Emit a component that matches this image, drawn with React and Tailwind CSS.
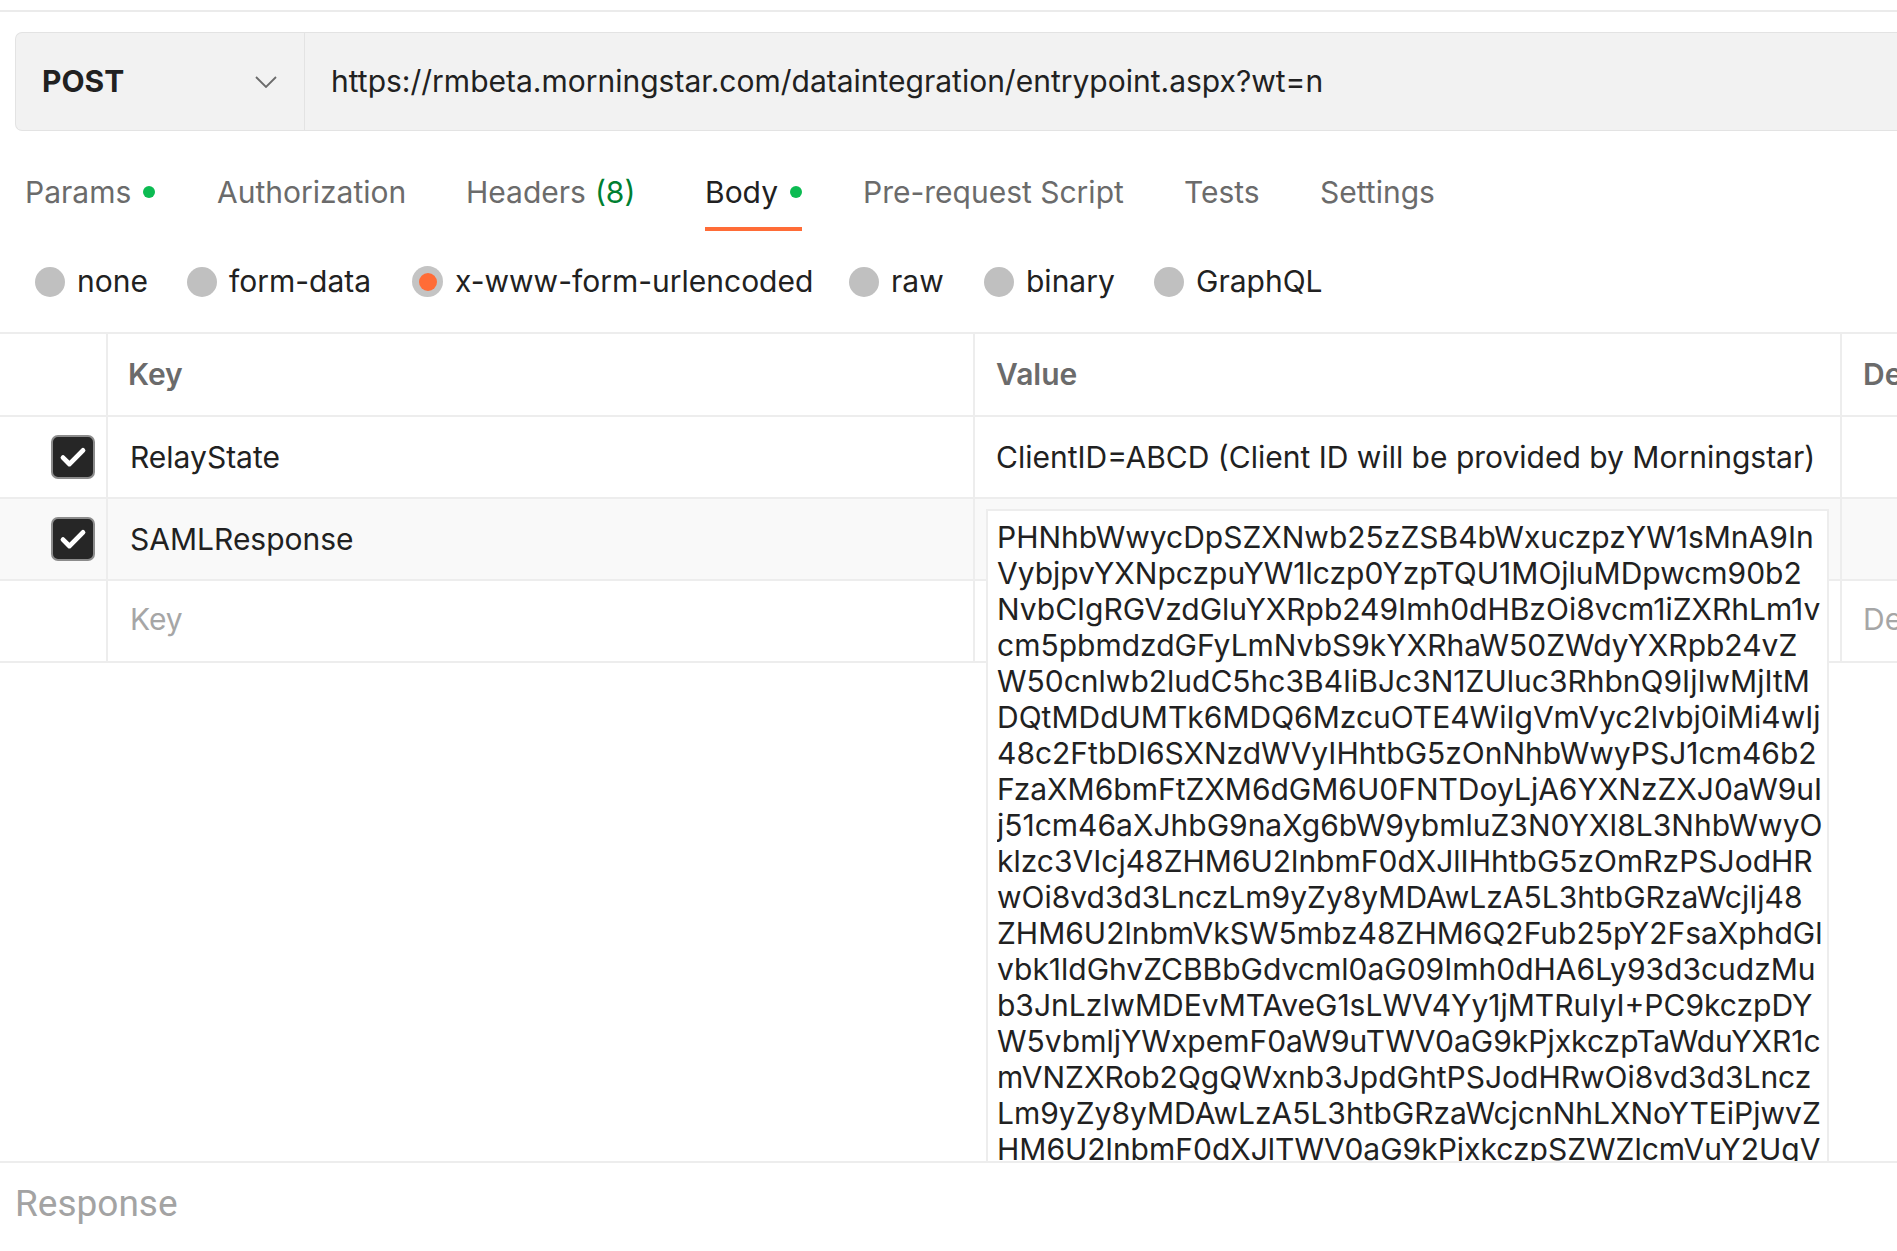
import React from "react";

const LINES = [
  "PHNhbWwycDpSZXNwb25zZSB4bWxuczpzYW1sMnA9In",
  "VybjpvYXNpczpuYW1lczp0YzpTQU1MOjluMDpwcm90b2",
  "NvbCIgRGVzdGluYXRpb249Imh0dHBzOi8vcm1iZXRhLm1v",
  "cm5pbmdzdGFyLmNvbS9kYXRhaW50ZWdyYXRpb24vZ",
  "W50cnlwb2ludC5hc3B4IiBJc3N1ZUluc3RhbnQ9IjIwMjItM",
  "DQtMDdUMTk6MDQ6MzcuOTE4WiIgVmVyc2lvbj0iMi4wIj",
  "48c2FtbDI6SXNzdWVyIHhtbG5zOnNhbWwyPSJ1cm46b2",
  "FzaXM6bmFtZXM6dGM6U0FNTDoyLjA6YXNzZXJ0aW9uI",
  "j51cm46aXJhbG9naXg6bW9ybmluZ3N0YXI8L3NhbWwyO",
  "klzc3VIcj48ZHM6U2lnbmF0dXJlIHhtbG5zOmRzPSJodHR",
  "wOi8vd3d3LnczLm9yZy8yMDAwLzA5L3htbGRzaWcjIj48",
  "ZHM6U2lnbmVkSW5mbz48ZHM6Q2Fub25pY2FsaXphdGl",
  "vbk1ldGhvZCBBbGdvcml0aG09Imh0dHA6Ly93d3cudzMu",
  "b3JnLzIwMDEvMTAveG1sLWV4Yy1jMTRuIyI+PC9kczpDY",
  "W5vbmljYWxpemF0aW9uTWV0aG9kPjxkczpTaWduYXR1c",
  "mVNZXRob2QgQWxnb3JpdGhtPSJodHRwOi8vd3d3Lncz",
  "Lm9yZy8yMDAwLzA5L3htbGRzaWcjcnNhLXNoYTEiPjwvZ",
  "HM6U2lnbmF0dXJlTWV0aG9kPjxkczpSZWZlcmVuY2UgV",
  "VJJPSIjXzA0YjY1ZWNlLWQ2ODQtNDI5Yy1hYjQ4LTQ1",
];

function Dot() {
  return <span className="ml-[12px] inline-block w-[12px] h-[12px] rounded-full bg-[#0cbb52]" />;
}

function Check() {
  return (
    <div className="w-[44px] h-[44px] rounded-[7px] bg-[#262626] border-2 border-[#8c8c8c] flex items-center justify-center">
      <svg width="32" height="32" viewBox="0 0 24 24" fill="none">
        <path d="M4.5 12.5l4.8 4.8L19.5 7" stroke="#fff" strokeWidth="3.6" strokeLinecap="round" strokeLinejoin="round" />
      </svg>
    </div>
  );
}

function Radio({ w, label, selected }) {
  return (
    <div className={`flex items-center shrink-0 ${w}`}>
      {selected ? (
        <span className="w-[31px] h-[31px] rounded-full bg-[#c4c4c4] flex items-center justify-center">
          <span className="w-[18px] h-[18px] rounded-full bg-[#ff6c37]" />
        </span>
      ) : (
        <span className="w-[30px] h-[30px] rounded-full bg-[#c0c0c0]" />
      )}
      <span className="ml-[12px] text-[30px] text-[#212121]">{label}</span>
    </div>
  );
}

export default function App() {
  return (
    <div className="w-[1897px] h-[1251px] overflow-hidden bg-white flex flex-col text-[#212121] font-['Inter','Noto_Sans',sans-serif]">
      <div className="flex-1 overflow-hidden flex flex-col">
        <div className="h-[10px] shrink-0" />
        <div className="h-[2px] bg-[#ebebeb] shrink-0" />
        {/* URL bar */}
        <div className="pt-[20px] pl-[15px] shrink-0">
          <div className="flex h-[99px] bg-[#f2f2f2] border border-r-0 border-[#e3e3e3] rounded-l-[7px]">
            <div className="w-[289px] shrink-0 flex items-center justify-between pl-[26px] pr-[27px] border-r border-[#e3e3e3]">
              <span className="text-[30px] font-bold text-[#212121]">POST</span>
              <svg width="22" height="12" viewBox="0 0 22 12" fill="none">
                <path d="M1 1l10 10L21 1" stroke="#6b6b6b" strokeWidth="1.8" />
              </svg>
            </div>
            <div className="flex items-center pl-[26px] text-[30px] text-[#212121] whitespace-nowrap">
              https://rmbeta.morningstar.com/dataintegration/entrypoint.aspx?wt=n
            </div>
          </div>
        </div>
        {/* Tabs */}
        <div className="flex h-[100px] pt-[26px] pl-[25px] shrink-0 text-[30px] text-[#6b6b6b]">
          <div className="w-[192px] shrink-0">
            <span className="inline-flex items-center h-[74px] border-b-4 border-transparent">Params<Dot /></span>
          </div>
          <div className="w-[249px] shrink-0">
            <span className="inline-flex items-center h-[74px] border-b-4 border-transparent">Authorization</span>
          </div>
          <div className="w-[239px] shrink-0">
            <span className="inline-flex items-center h-[74px] border-b-4 border-transparent">
              Headers<span className="ml-[9px] text-[#007f31]">(8)</span>
            </span>
          </div>
          <div className="w-[158px] shrink-0">
            <span className="inline-flex items-center h-[74px] border-b-4 border-[#ff6c37] text-[#212121]">Body<Dot /></span>
          </div>
          <div className="w-[321px] shrink-0">
            <span className="inline-flex items-center h-[74px] border-b-4 border-transparent">Pre-request Script</span>
          </div>
          <div className="w-[136px] shrink-0">
            <span className="inline-flex items-center h-[74px] border-b-4 border-transparent">Tests</span>
          </div>
          <div className="shrink-0">
            <span className="inline-flex items-center h-[74px] border-b-4 border-transparent">Settings</span>
          </div>
        </div>
        {/* Body type radios */}
        <div className="flex items-center h-[101px] pl-[35px] shrink-0">
          <Radio w="w-[152px]" label="none" />
          <Radio w="w-[225px]" label="form-data" />
          <Radio w="w-[437px]" label="x-www-form-urlencoded" selected />
          <Radio w="w-[135px]" label="raw" />
          <Radio w="w-[170px]" label="binary" />
          <Radio w="" label="GraphQL" />
        </div>
        {/* Table */}
        <div className="border-t-2 border-[#ededed] shrink-0 text-[30px]">
          <div className="flex h-[83px] border-b-2 border-[#ededed]">
            <div className="w-[108px] shrink-0 border-r-2 border-[#ededed]" />
            <div className="w-[867px] shrink-0 border-r-2 border-[#ededed] flex items-center pl-[20px] font-semibold text-[#6b6b6b]">Key</div>
            <div className="w-[867px] shrink-0 border-r-2 border-[#ededed] flex items-center pl-[21px] font-semibold text-[#6b6b6b]">Value</div>
            <div className="flex-1 flex items-center pl-[21px] font-semibold text-[#6b6b6b] whitespace-nowrap overflow-hidden">Description</div>
          </div>
          <div className="flex h-[82px] border-b-2 border-[#ededed]">
            <div className="w-[108px] shrink-0 border-r-2 border-[#ededed] flex items-center pl-[51px]"><Check /></div>
            <div className="w-[867px] shrink-0 border-r-2 border-[#ededed] flex items-center pl-[22px]">RelayState</div>
            <div className="w-[867px] shrink-0 border-r-2 border-[#ededed] flex items-center pl-[21px] whitespace-nowrap">ClientID=ABCD (Client ID will be provided by Morningstar)</div>
            <div className="flex-1" />
          </div>
          <div className="flex h-[82px] border-b-2 border-[#ededed] bg-[#f9f9f9]">
            <div className="w-[108px] shrink-0 border-r-2 border-[#ededed] flex items-center pl-[51px]"><Check /></div>
            <div className="w-[867px] shrink-0 border-r-2 border-[#ededed] flex items-center pl-[22px]">SAMLResponse</div>
            <div className="w-[867px] shrink-0 border-r-2 border-[#ededed] relative">
              <div className="absolute left-[11px] top-[10px] w-[843px] h-[900px] z-10 bg-white border-2 border-[#ededed] pt-[8px] pl-[9px] leading-[36px] text-[#212121]">
                {LINES.map((l, i) => (
                  <div key={i} className="whitespace-nowrap overflow-hidden">{l}</div>
                ))}
              </div>
            </div>
            <div className="flex-1" />
          </div>
          <div className="flex h-[82px] border-b-2 border-[#ededed]">
            <div className="w-[108px] shrink-0 border-r-2 border-[#ededed]" />
            <div className="w-[867px] shrink-0 border-r-2 border-[#ededed] flex items-center pl-[22px] pb-[4px] text-[#a6a6a6]">Key</div>
            <div className="w-[867px] shrink-0 border-r-2 border-[#ededed]" />
            <div className="flex-1 flex items-center pl-[21px] pb-[4px] text-[#a6a6a6] whitespace-nowrap overflow-hidden">Description</div>
          </div>
        </div>
      </div>
      {/* Response */}
      <div className="h-[90px] shrink-0 border-t-2 border-[#ededed] pl-[15px] pt-[23px]">
        <span className="text-[37px] leading-[36px] text-[#a3a3a3] font-['Roboto',sans-serif]">Response</span>
      </div>
    </div>
  );
}
